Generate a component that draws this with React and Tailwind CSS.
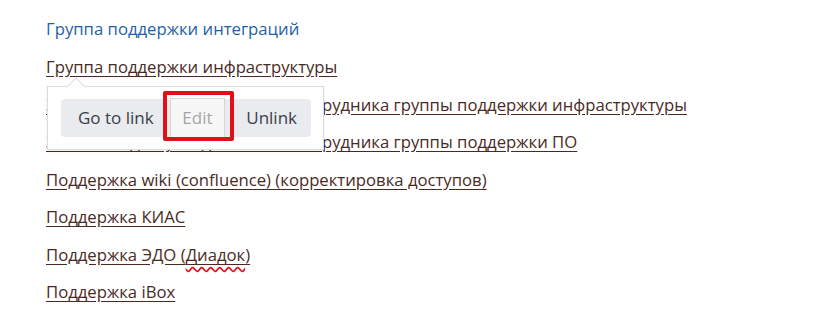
import React from 'react';

const links = [
  'Группа поддержки инфраструктуры',
  'Заявка на доступы для нового сотрудника группы поддержки инфраструктуры',
  'Заявка на доступы для нового сотрудника группы поддержки ПО',
  'Поддержка wiki (confluence) (корректировка доступов)',
  'Поддержка КИАС',
  'Поддержка ЭДО (Диадок)',
  'Поддержка iBox',
];

const LinkPopover = () => (
  <div className="absolute left-[47px] top-[86px] z-20 w-[277px] h-[64px] bg-white border border-[#dcdcdc] shadow-[0_1px_3px_rgba(0,0,0,0.08)]">
    <div className="absolute -top-[7px] left-[22px] w-3 h-3 rotate-45 bg-white border-l border-t border-[#dcdcdc]" />
    <div className="absolute left-[13px] top-[12px] flex items-center h-[38px] w-[250px] rounded-[4px] bg-[#e9ebef] text-[17px] text-[#3a3f47]">
      <button className="h-full pl-[17px] pr-[8px] whitespace-nowrap">Go to link</button>
      <button className="relative h-[40px] w-[57px] -my-[1px] ml-[8px] bg-[#f7f7f7] border border-[#d6d6d6] text-[#a6a6a6]">
        Edit
        <span className="absolute -left-[8px] -top-[8px] w-[71px] h-[50px] border-[4px] border-[#e0101a] rounded-[2px]" />
      </button>
      <button className="h-full pl-[21px] pr-[14px]">Unlink</button>
    </div>
  </div>
);

const App = () => {
  return (
    <div className="relative w-[818px] h-[314px] bg-white overflow-hidden font-['Open_Sans',sans-serif] text-[16.7px]">
      <div className="pl-[46px] pt-[17px] flex flex-col">
        <div className="leading-6 text-[#1f5fa8]">Группа поддержки интеграций</div>
        <div className="mt-[14px] flex flex-col gap-[13.5px]">
          {links.map((t, i) => (
            <div key={i} className="leading-6 whitespace-nowrap">
              <span className="text-[#4a2a1f] underline underline-offset-[3px] decoration-[#4a2a1f]">
                {i === 5 ? (
                  <>
                    Поддержка ЭДО (
                    <span className="underline decoration-wavy decoration-[#e0101a] underline-offset-[6px] [text-decoration-skip-ink:none]">Диадок</span>
                    )
                  </>
                ) : t}
              </span>
            </div>
          ))}
        </div>
      </div>
      <LinkPopover />
    </div>
  );
};

export default App;
